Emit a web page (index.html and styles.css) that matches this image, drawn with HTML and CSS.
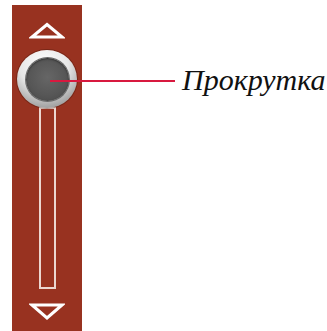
FILE: index.html
```html
<!DOCTYPE html>
<html lang="ru">
<head>
    <meta charset="utf-8">
    <title>Прокрутка</title>
    <link rel="stylesheet" href="styles.css">
</head>
<body class="page">
    <div class="scrollbar">
        <svg class="arrow" width="36" height="17" viewBox="0 0 36 17">
            <polygon points="18,2.5 33,15 3,15" fill="none" stroke="#fff" stroke-width="3" stroke-linejoin="miter"/>
        </svg>
        <div class="knob">
            <div class="knob-core"></div>
        </div>
        <div class="track"></div>
        <svg class="arrow arrow-down" width="36" height="19" viewBox="0 0 36 19">
            <polygon points="3,2 33,2 18,15" fill="none" stroke="#fff" stroke-width="3" stroke-linejoin="miter"/>
        </svg>
    </div>

    <div class="callout">
        <span class="callout-line"></span>
        <span class="callout-text">Прокрутка</span>
    </div>
</body>
</html>
```

FILE: styles.css
```css
html, body {
    margin: 0;
    padding: 0;
}

.page {
    width: 327px;
    height: 331px;
    overflow: hidden;
    position: relative;
    background-color: #ffffff;
}

.scrollbar {
    margin: 5px 0 0 12px;
    width: 70px;
    height: 326px;
    background-color: #983220;
    display: flex;
    flex-direction: column;
    align-items: center;
    box-sizing: border-box;
    padding-top: 17px;
}

.arrow {
    display: block;
    flex: none;
}

.arrow-down {
    margin-top: 14px;
}

.knob {
    position: relative;
    z-index: 1;
    margin-top: 11px;
    width: 60px;
    height: 58px;
    border-radius: 50%;
    background: radial-gradient(circle at 45% 25%, #ffffff 0%, #e6e6e6 45%, #a0a0a0 80%, #767676 100%);
    box-shadow: 0 0 0 1px rgba(60, 20, 10, 0.35);
    display: flex;
    align-items: center;
    justify-content: center;
}

.knob-core {
    width: 43px;
    height: 43px;
    border-radius: 50%;
    background: radial-gradient(circle at 50% 45%, #666666 0%, #575757 55%, #464646 100%);
    box-shadow: 0 0 0 1px #6a6a6a, inset 0 1px 2px rgba(0, 0, 0, 0.45);
}

.track {
    width: 17px;
    height: 182px;
    margin-top: -1px;
    box-sizing: border-box;
    border: 2px solid #ecd6d0;
    flex: none;
}

.callout {
    position: absolute;
    left: 50px;
    top: 63px;
    display: flex;
    align-items: center;
    z-index: 2;
}

.callout-line {
    width: 125px;
    height: 2px;
    background-color: #d8193f;
    margin-top: 2px;
}

.callout-text {
    margin-left: 7px;
    font-family: "Liberation Serif", "DejaVu Serif", serif;
    font-style: italic;
    font-size: 30px;
    color: #111111;
}
```
